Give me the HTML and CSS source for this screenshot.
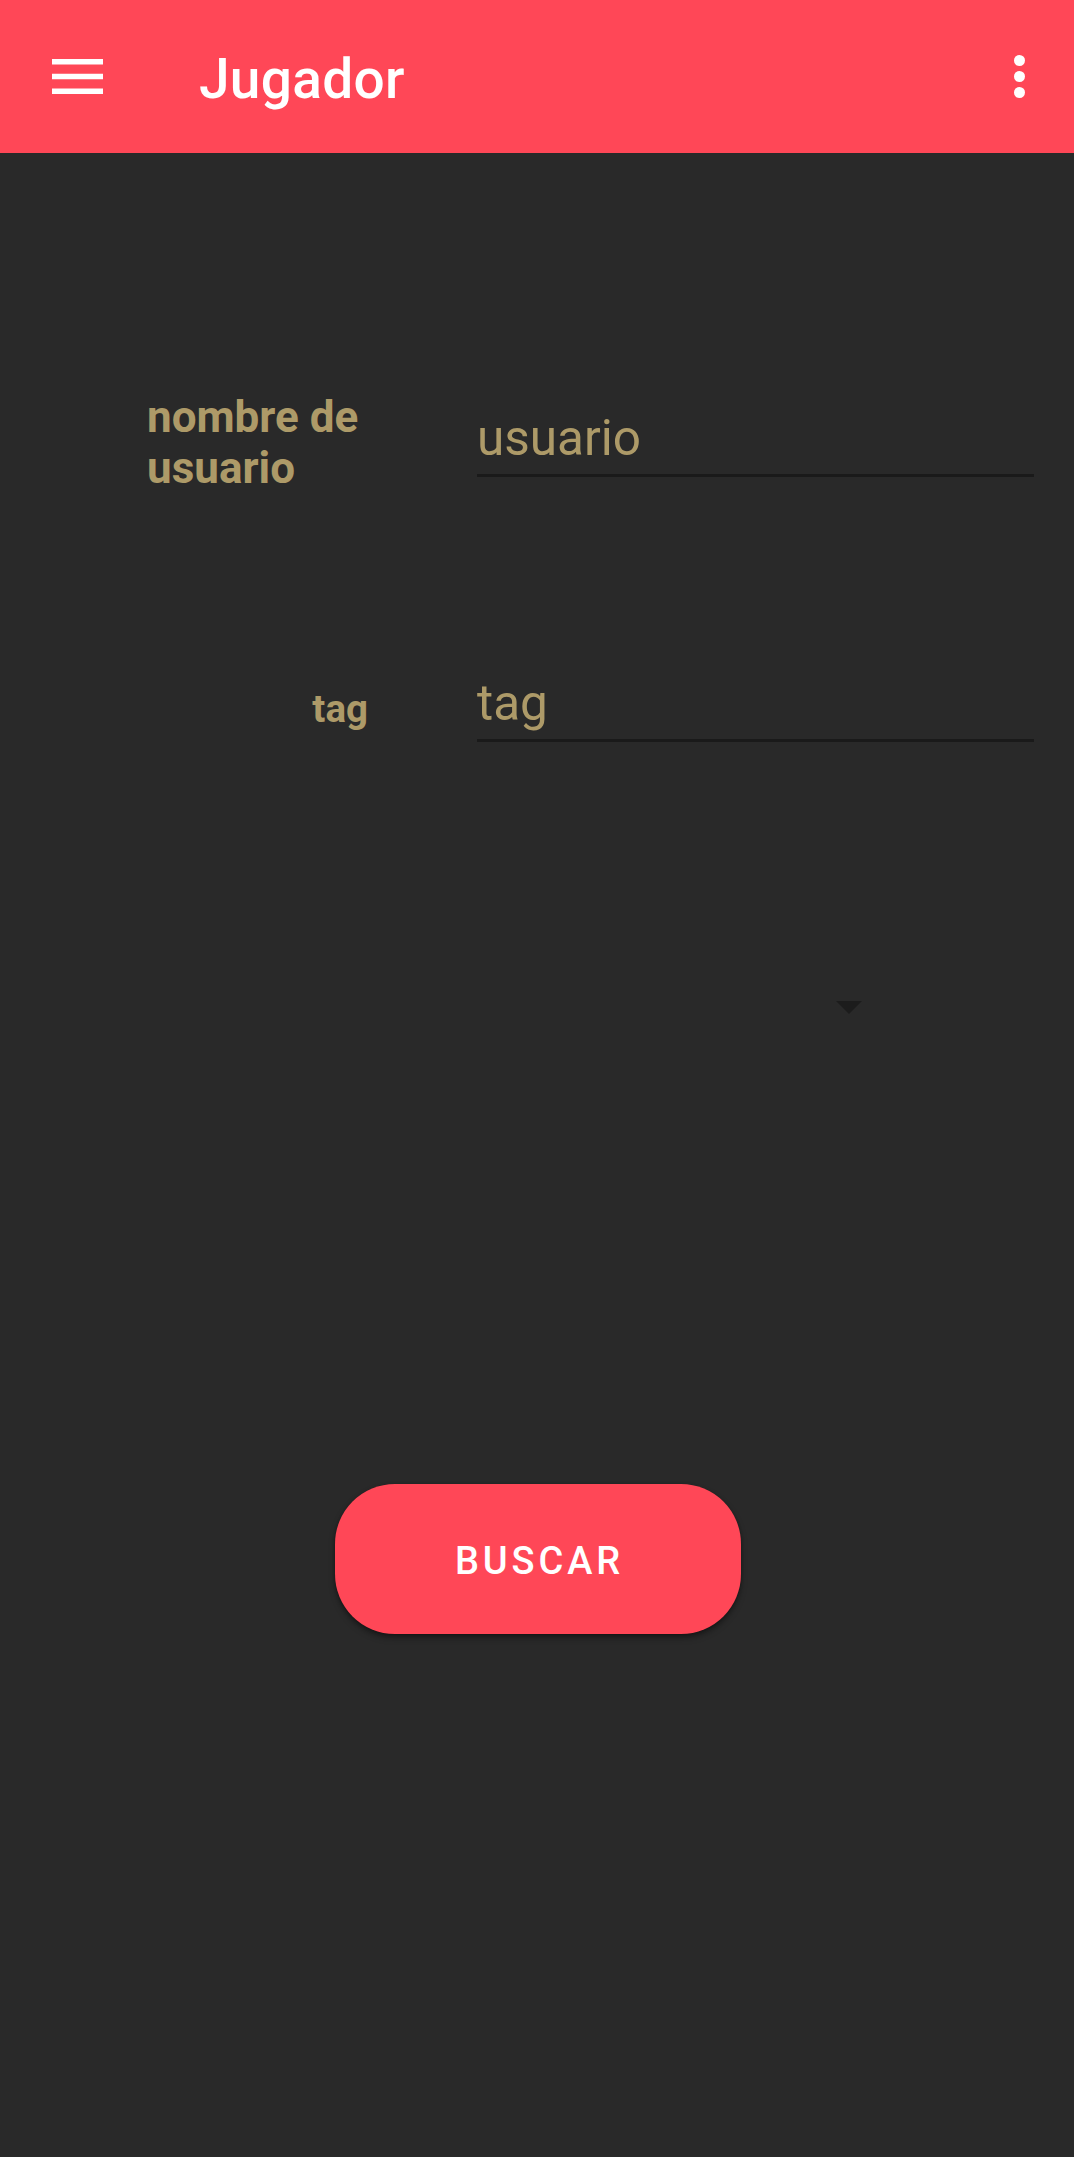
FILE: index.html
```html
<!DOCTYPE html>
<html lang="es">
<head>
<meta charset="utf-8">
<title>Jugador</title>
<link rel="stylesheet" href="styles.css">
</head>
<body>
<header class="appbar">
  <svg class="menu-icon" width="51" height="35" viewBox="0 0 51 35" aria-hidden="true">
    <rect x="0" y="0" width="51" height="5.5" fill="#fff"/>
    <rect x="0" y="14.75" width="51" height="5.5" fill="#fff"/>
    <rect x="0" y="29.5" width="51" height="5.5" fill="#fff"/>
  </svg>
  <h1 class="title">Jugador</h1>
  <svg class="more-icon" width="11" height="43" viewBox="0 0 11 43" aria-hidden="true">
    <circle cx="5.5" cy="5.5" r="5.5" fill="#fff"/>
    <circle cx="5.5" cy="21.5" r="5.5" fill="#fff"/>
    <circle cx="5.5" cy="37.5" r="5.5" fill="#fff"/>
  </svg>
</header>
<main class="content">
  <div class="form-row row-user">
    <div class="label">nombre de usuario</div>
    <div class="field">usuario</div>
  </div>
  <div class="form-row row-tag">
    <div class="label label-small">tag</div>
    <div class="field">tag</div>
  </div>
  <div class="spinner">
    <span class="spinner-arrow"></span>
  </div>
  <div class="actions">
    <button class="btn" type="button">BUSCAR</button>
  </div>
</main>
</body>
</html>
```
FILE: styles.css
```css
html, body {
  margin: 0;
  padding: 0;
}
body {
  width: 1074px;
  min-height: 2157px;
  background: #292929;
  font-family: Roboto, "Noto Sans", "Liberation Sans", sans-serif;
}
.appbar {
  height: 153px;
  background: #ff4757;
  display: flex;
  align-items: center;
  box-sizing: border-box;
  padding: 0 49px 0 52px;
}
.menu-icon {
  flex: none;
  margin-top: -1px;
}
.title {
  flex: 1;
  margin: 0 0 0 96px;
  padding-top: 5px;
  font-size: 55px;
  font-weight: 500;
  line-height: 64px;
  color: #ffffff;
  letter-spacing: 0.3px;
}
.more-icon {
  flex: none;
  margin-top: 0;
}
.content {
  display: flex;
  flex-direction: column;
}
.form-row {
  display: grid;
  grid-template-columns: 221px 557px;
  column-gap: 109px;
  align-items: center;
  padding-left: 147px;
}
.row-user {
  margin-top: 239px;
}
.row-tag {
  margin-top: 180px;
}
.label {
  font-size: 44px;
  font-weight: 700;
  line-height: 51px;
  color: #ad9a68;
}
.label-small {
  justify-self: end;
  font-size: 38.5px;
  line-height: 45px;
  margin-top: 0;
}
.field {
  font-size: 49.5px;
  font-weight: 400;
  line-height: 59px;
  color: #ad9a68;
  padding-bottom: 6px;
  border-bottom: 3px solid #1a1a1a;
}
.spinner {
  margin-top: 259px;
  padding-left: 836px;
  height: 13px;
}
.spinner-arrow {
  display: block;
  width: 0;
  height: 0;
  border-left: 13.5px solid transparent;
  border-right: 13.5px solid transparent;
  border-top: 13px solid #1c1c1c;
}
.actions {
  display: flex;
  justify-content: center;
  margin-top: 470px;
  padding-left: 1px;
}
.btn {
  width: 406px;
  height: 150px;
  border: none;
  border-radius: 60px;
  background: #ff4757;
  color: #ffffff;
  font-family: Roboto, "Noto Sans", "Liberation Sans", sans-serif;
  font-size: 38px;
  font-weight: 500;
  letter-spacing: 3.9px;
  padding: 3px 0 0 4px;
  box-shadow: 0 4px 6px rgba(0, 0, 0, 0.35), 0 1px 3px rgba(0, 0, 0, 0.25);
  cursor: pointer;
}
```
